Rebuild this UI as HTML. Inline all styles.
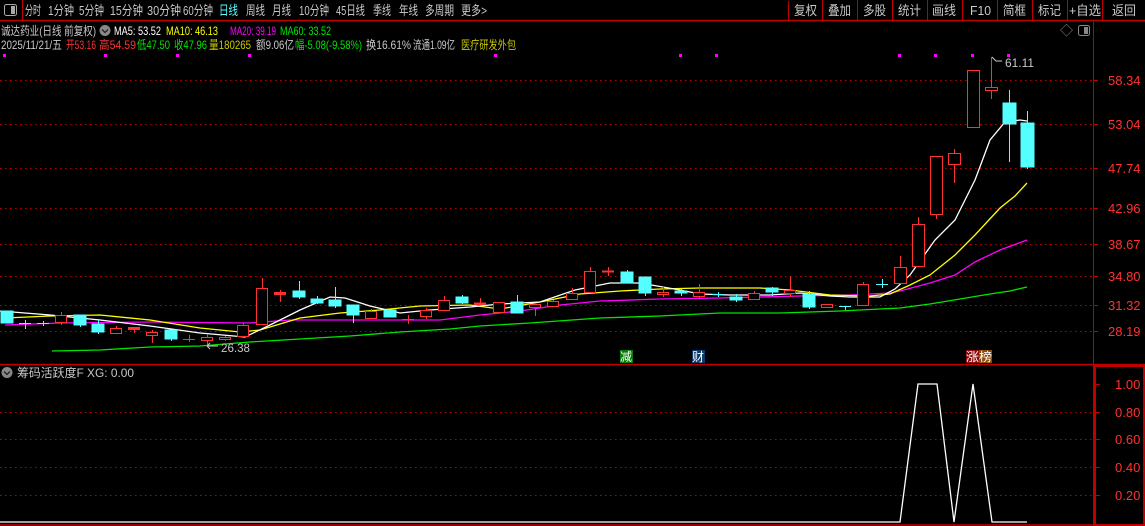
<!DOCTYPE html>
<html><head><meta charset="utf-8"><style>
body{margin:0;background:#000;width:1145px;height:526px;overflow:hidden;font-family:"Liberation Sans","Noto Sans CJK SC",sans-serif;}
svg{display:block}
text{font-family:"Liberation Sans","Noto Sans CJK SC",sans-serif;}
</style></head><body>
<svg width="1145" height="526" viewBox="0 0 1145 526" xmlns="http://www.w3.org/2000/svg">
<rect width="1145" height="526" fill="#000"/>
<line x1="0" y1="20.5" x2="1145" y2="20.5" stroke="#c00000" stroke-width="1.5"/>
<line x1="22.5" y1="0" x2="22.5" y2="20" stroke="#c00000"/>
<rect x="4.5" y="4.5" width="12" height="11" rx="2" fill="none" stroke="#aaa"/>
<rect x="11" y="6" width="4" height="8" fill="#aaa"/>
<g font-size="13" fill="#c8c8c8">
<text x="25" y="15" textLength="16" lengthAdjust="spacingAndGlyphs">分时</text>
<text x="48" y="15" textLength="26" lengthAdjust="spacingAndGlyphs">1分钟</text>
<text x="79" y="15" textLength="25" lengthAdjust="spacingAndGlyphs">5分钟</text>
<text x="110" y="15" textLength="33" lengthAdjust="spacingAndGlyphs">15分钟</text>
<text x="147" y="15" textLength="34" lengthAdjust="spacingAndGlyphs">30分钟</text>
<text x="183" y="15" textLength="30" lengthAdjust="spacingAndGlyphs">60分钟</text>
<text x="219" y="15" textLength="19" lengthAdjust="spacingAndGlyphs" fill="#54ffff">日线</text>
<text x="246" y="15" textLength="19" lengthAdjust="spacingAndGlyphs">周线</text>
<text x="272" y="15" textLength="19" lengthAdjust="spacingAndGlyphs">月线</text>
<text x="299" y="15" textLength="30" lengthAdjust="spacingAndGlyphs">10分钟</text>
<text x="336" y="15" textLength="29" lengthAdjust="spacingAndGlyphs">45日线</text>
<text x="373" y="15" textLength="18" lengthAdjust="spacingAndGlyphs">季线</text>
<text x="399" y="15" textLength="19" lengthAdjust="spacingAndGlyphs">年线</text>
<text x="425" y="15" textLength="29" lengthAdjust="spacingAndGlyphs">多周期</text>
<text x="461" y="15" textLength="26" lengthAdjust="spacingAndGlyphs">更多&gt;</text>
<text x="794" y="15" textLength="23" lengthAdjust="spacingAndGlyphs">复权</text>
<text x="828" y="15" textLength="23" lengthAdjust="spacingAndGlyphs">叠加</text>
<text x="863" y="15" textLength="23" lengthAdjust="spacingAndGlyphs">多股</text>
<text x="898" y="15" textLength="23" lengthAdjust="spacingAndGlyphs">统计</text>
<text x="932" y="15" textLength="24" lengthAdjust="spacingAndGlyphs">画线</text>
<text x="970" y="15" textLength="21" lengthAdjust="spacingAndGlyphs">F10</text>
<text x="1003" y="15" textLength="23" lengthAdjust="spacingAndGlyphs">简框</text>
<text x="1038" y="15" textLength="23" lengthAdjust="spacingAndGlyphs">标记</text>
<text x="1069" y="15" textLength="32" lengthAdjust="spacingAndGlyphs">+自选</text>
<text x="1112" y="15" textLength="24" lengthAdjust="spacingAndGlyphs">返回</text>
</g>
<g stroke="#c00000"><line x1="788.5" y1="1" x2="788.5" y2="20"/><line x1="822.5" y1="0" x2="822.5" y2="20"/><line x1="857.5" y1="0" x2="857.5" y2="20"/><line x1="892.5" y1="0" x2="892.5" y2="20"/><line x1="927.5" y1="0" x2="927.5" y2="20"/><line x1="962.5" y1="0" x2="962.5" y2="20"/><line x1="997.5" y1="0" x2="997.5" y2="20"/><line x1="1032.5" y1="0" x2="1032.5" y2="20"/><line x1="1067.5" y1="0" x2="1067.5" y2="20"/><line x1="1102.5" y1="0" x2="1102.5" y2="20"/></g>
<g font-size="12">
<text x="1" y="35" textLength="95" lengthAdjust="spacingAndGlyphs" fill="#c8c8c8">诚达药业(日线 前复权)</text>
<circle cx="105" cy="30.5" r="5.5" fill="#888"/><path d="M102 29.5l3 3 3-3" stroke="#222" fill="none" stroke-width="1.3"/>
<text x="114" y="35" textLength="47" lengthAdjust="spacingAndGlyphs" fill="#fff">MA5: 53.52</text>
<text x="166" y="35" textLength="52" lengthAdjust="spacingAndGlyphs" fill="#ffff00">MA10: 46.13</text>
<text x="230" y="35" textLength="46" lengthAdjust="spacingAndGlyphs" fill="#ff00ff">MA20: 39.19</text>
<text x="280" y="35" textLength="51" lengthAdjust="spacingAndGlyphs" fill="#00e600">MA60: 33.52</text>
<text x="1" y="49" textLength="61" lengthAdjust="spacingAndGlyphs" fill="#c8c8c8">2025/11/21/五</text>
<text x="66" y="49" textLength="30" lengthAdjust="spacingAndGlyphs" fill="#ff3232">开53.16</text>
<text x="99" y="49" textLength="37" lengthAdjust="spacingAndGlyphs" fill="#ff3232">高54.59</text>
<text x="137" y="49" textLength="33" lengthAdjust="spacingAndGlyphs" fill="#00e600">低47.50</text>
<text x="174" y="49" textLength="33" lengthAdjust="spacingAndGlyphs" fill="#00e600">收47.96</text>
<text x="209" y="49" textLength="42" lengthAdjust="spacingAndGlyphs" fill="#c8c800">量180265</text>
<text x="256" y="49" textLength="38" lengthAdjust="spacingAndGlyphs" fill="#c8c8c8">额9.06亿</text>
<text x="295" y="49" textLength="67" lengthAdjust="spacingAndGlyphs" fill="#00e600">幅-5.08(-9.58%)</text>
<text x="366" y="49" textLength="45" lengthAdjust="spacingAndGlyphs" fill="#c8c8c8">换16.61%</text>
<text x="413" y="49" textLength="42" lengthAdjust="spacingAndGlyphs" fill="#c8c8c8">流通1.09亿</text>
<text x="461" y="49" textLength="55" lengthAdjust="spacingAndGlyphs" fill="#c8c800">医疗研发外包</text>
</g>
<text x="1060" y="35" font-size="13" fill="#888">◇</text>
<rect x="1078.5" y="25.5" width="11" height="10" rx="2" fill="none" stroke="#888"/><rect x="1084" y="27" width="4" height="7" fill="#888"/>
<g fill="#ff00ff"><rect x="3" y="54" width="3" height="3"/><rect x="104" y="54" width="3" height="3"/><rect x="176" y="54" width="3" height="3"/><rect x="248" y="54" width="3" height="3"/><rect x="494" y="54" width="3" height="3"/><rect x="679" y="54" width="3" height="3"/><rect x="715" y="54" width="3" height="3"/><rect x="898" y="54" width="3" height="3"/><rect x="934" y="54" width="3" height="3"/><rect x="971" y="54" width="3" height="3"/><rect x="1007" y="54" width="3" height="3"/></g>
<line x1="1093.5" y1="21" x2="1093.5" y2="526" stroke="#c00000"/>
<line x1="0" y1="364.5" x2="1145" y2="364.5" stroke="#c00000" stroke-width="1.5"/>
<rect x="1095" y="366" width="49" height="159" fill="none" stroke="#c00000" stroke-width="2"/>
<line x1="0" y1="525" x2="1093" y2="525" stroke="#c00000" stroke-width="1.5"/>
<g stroke="#c00000" stroke-dasharray="1.5,3.5" stroke-width="1">
<line x1="0" y1="80.5" x2="1093" y2="80.5"/><line x1="0" y1="124.5" x2="1093" y2="124.5"/><line x1="0" y1="168.5" x2="1093" y2="168.5"/><line x1="0" y1="208.5" x2="1093" y2="208.5"/><line x1="0" y1="244.5" x2="1093" y2="244.5"/><line x1="0" y1="276.5" x2="1093" y2="276.5"/><line x1="0" y1="305.5" x2="1093" y2="305.5"/><line x1="0" y1="331.5" x2="1093" y2="331.5"/>
<line x1="0" y1="412.5" x2="1093" y2="412.5"/><line x1="0" y1="439.5" x2="1093" y2="439.5"/><line x1="0" y1="467.5" x2="1093" y2="467.5"/><line x1="0" y1="495.5" x2="1093" y2="495.5"/>
</g>
<g stroke="#c00000"><line x1="1093" y1="80.5" x2="1098" y2="80.5"/><line x1="1093" y1="124.5" x2="1098" y2="124.5"/><line x1="1093" y1="168.5" x2="1098" y2="168.5"/><line x1="1093" y1="208.5" x2="1098" y2="208.5"/><line x1="1093" y1="244.5" x2="1098" y2="244.5"/><line x1="1093" y1="276.5" x2="1098" y2="276.5"/><line x1="1093" y1="305.5" x2="1098" y2="305.5"/><line x1="1093" y1="331.5" x2="1098" y2="331.5"/>
<line x1="1095" y1="384.5" x2="1100" y2="384.5"/><line x1="1095" y1="412.5" x2="1100" y2="412.5"/><line x1="1095" y1="439.5" x2="1100" y2="439.5"/><line x1="1095" y1="467.5" x2="1100" y2="467.5"/><line x1="1095" y1="495.5" x2="1100" y2="495.5"/></g>
<g font-size="13" fill="#ff3232">
<text x="1108" y="85">58.34</text><text x="1108" y="129">53.04</text><text x="1108" y="173">47.74</text><text x="1108" y="213">42.96</text><text x="1108" y="249">38.67</text><text x="1108" y="281">34.80</text><text x="1108" y="310">31.32</text><text x="1108" y="336">28.19</text>
<text x="1115" y="389">1.00</text><text x="1115" y="417">0.80</text><text x="1115" y="444">0.60</text><text x="1115" y="472">0.40</text><text x="1115" y="500">0.20</text>
</g>
<polyline fill="none" stroke="#00e600" stroke-width="1.3" points="52,351 100,350 150,347 200,346 250,342 300,339 350,336 400,332 450,329 480,326 530,323 600,318 660,316 720,313 780,313 840,311 900,308 930,304 960,299 990,294 1010,291 1027,287"/>
<polyline fill="none" stroke="#ff00ff" stroke-width="1.3" points="5,325 60,323 150,322 250,323 290,320 380,320 440,320 480,315 520,311 560,305 600,301 660,299 720,298 800,296 850,295 890,293 900,291 930,283 955,275 975,262 1000,250 1027,240"/>
<polyline fill="none" stroke="#ffff00" stroke-width="1.3" points="5,318 50,316 100,315 150,320 200,328 240,332 260,330 300,318 340,313 380,310 420,306 470,305 500,309 540,302 580,294 620,291 660,289 700,288 760,288 790,290 830,295 870,296 890,294 910,285 930,275 955,255 975,235 1000,208 1015,196 1027,183"/>
<polyline fill="none" stroke="#ffffff" stroke-width="1.3" points="0,311 50,315 100,320 150,326 200,333 245,337 270,325 300,310 330,297 345,298 370,306 400,313 430,310 470,307 500,304 540,302 575,290 610,283 640,283 680,290 700,294 730,295 770,295 800,293 830,296 850,297 880,297 895,289 910,275 935,240 955,220 975,180 990,140 1005,122 1020,120 1027,121"/>
<g stroke-width="1">
<g fill="#54ffff" stroke="#54ffff">
<line x1="7.5" y1="311" x2="7.5" y2="323"/><rect x="1" y="311" width="12" height="12"/>
<line x1="19" y1="323.5" x2="31" y2="323.5"/><line x1="25.5" y1="320" x2="25.5" y2="329"/>
<line x1="37" y1="323.5" x2="49" y2="323.5"/><line x1="43.5" y1="321" x2="43.5" y2="326"/>
<line x1="80.5" y1="315" x2="80.5" y2="327"/><rect x="74" y="315" width="12" height="10"/>
<line x1="98.5" y1="320" x2="98.5" y2="334"/><rect x="92" y="324" width="12" height="8"/>
<line x1="171.5" y1="330" x2="171.5" y2="341"/><rect x="165" y="330" width="12" height="9"/>
<line x1="299.5" y1="281" x2="299.5" y2="299"/><rect x="293" y="291" width="12" height="6"/>
<line x1="317.5" y1="296" x2="317.5" y2="304"/><rect x="311" y="299" width="12" height="4"/>
<line x1="335.5" y1="287" x2="335.5" y2="308"/><rect x="329" y="300" width="12" height="6"/>
<line x1="353.5" y1="305" x2="353.5" y2="323"/><rect x="347" y="305" width="12" height="10"/>
<rect x="384" y="310" width="12" height="7"/>
<line x1="462.5" y1="295" x2="462.5" y2="304"/><rect x="456" y="297" width="12" height="6"/>
<line x1="517.5" y1="295" x2="517.5" y2="313"/><rect x="511" y="302" width="12" height="11"/>
<line x1="627.5" y1="270" x2="627.5" y2="283"/><rect x="621" y="272" width="12" height="11"/>
<line x1="645.5" y1="277" x2="645.5" y2="296"/><rect x="639" y="277" width="12" height="16"/>
<line x1="681.5" y1="288" x2="681.5" y2="296"/><rect x="675" y="291" width="12" height="2"/>
<line x1="712" y1="294.5" x2="724" y2="294.5"/><line x1="718.5" y1="292" x2="718.5" y2="297"/>
<line x1="736.5" y1="294" x2="736.5" y2="302"/><rect x="730" y="297" width="12" height="3"/>
<line x1="772.5" y1="287" x2="772.5" y2="296"/><rect x="766" y="288" width="12" height="4"/>
<line x1="809.5" y1="291" x2="809.5" y2="309"/><rect x="803" y="294" width="12" height="13"/>
<line x1="839" y1="306.5" x2="851" y2="306.5"/><line x1="845.5" y1="306" x2="845.5" y2="310"/>
<line x1="876" y1="284.5" x2="888" y2="284.5"/><line x1="882.5" y1="279" x2="882.5" y2="288"/>
<line x1="1009.5" y1="90" x2="1009.5" y2="162"/><rect x="1003" y="103" width="13" height="21"/>
<line x1="1027.5" y1="111" x2="1027.5" y2="169"/><rect x="1021" y="123" width="13" height="44"/>
</g>
<g fill="#000" stroke="#ff3232">
<line x1="61.5" y1="312" x2="61.5" y2="325"/><rect x="55.5" y="315.5" width="11" height="7"/>
<line x1="116.5" y1="326" x2="116.5" y2="334"/><rect x="110.5" y="328.5" width="11" height="5"/>
<line x1="134.5" y1="327" x2="134.5" y2="333"/><rect x="128.5" y="327.5" width="11" height="2" fill="#ff3232"/>
<line x1="152.5" y1="330" x2="152.5" y2="343"/><rect x="146.5" y="332.5" width="11" height="3"/>
<line x1="183" y1="339.5" x2="195" y2="339.5"/><line x1="189.5" y1="335" x2="189.5" y2="342"/>
<line x1="207.5" y1="334" x2="207.5" y2="345"/><rect x="201.5" y="337.5" width="11" height="3"/>
<line x1="225.5" y1="336" x2="225.5" y2="341"/><rect x="219.5" y="337.5" width="11" height="2"/>
<line x1="243.5" y1="323" x2="243.5" y2="337"/><rect x="237.5" y="325.5" width="11" height="11"/>
<line x1="262.5" y1="278" x2="262.5" y2="325"/><rect x="256.5" y="288.5" width="11" height="36"/>
<line x1="280.5" y1="290" x2="280.5" y2="302"/><rect x="274.5" y="292.5" width="11" height="2" fill="#ff3232"/>
<line x1="371.5" y1="309" x2="371.5" y2="319"/><rect x="365.5" y="311.5" width="11" height="7"/>
<line x1="402" y1="319.5" x2="414" y2="319.5"/><line x1="408.5" y1="315" x2="408.5" y2="324"/>
<line x1="426.5" y1="308" x2="426.5" y2="319"/><rect x="420.5" y="310.5" width="11" height="6"/>
<line x1="444.5" y1="296" x2="444.5" y2="311"/><rect x="438.5" y="300.5" width="11" height="10"/>
<line x1="480.5" y1="298" x2="480.5" y2="305"/><rect x="474.5" y="303" width="11" height="1.5" fill="#ff3232"/>
<rect x="493.5" y="302.5" width="11" height="10"/>
<line x1="535.5" y1="304" x2="535.5" y2="316"/><rect x="529.5" y="304.5" width="11" height="3"/>
<line x1="553.5" y1="300" x2="553.5" y2="307"/><rect x="547.5" y="301.5" width="11" height="5"/>
<line x1="572.5" y1="288" x2="572.5" y2="300"/><rect x="566.5" y="293.5" width="11" height="6"/>
<line x1="590.5" y1="267" x2="590.5" y2="293"/><rect x="584.5" y="271.5" width="11" height="21"/>
<line x1="602" y1="271.5" x2="614" y2="271.5" stroke-width="2"/><line x1="608.5" y1="267" x2="608.5" y2="276"/>
<line x1="663.5" y1="286" x2="663.5" y2="297"/><rect x="657.5" y="292.5" width="11" height="2"/>
<line x1="699.5" y1="284" x2="699.5" y2="299"/><rect x="693.5" y="292.5" width="11" height="4"/>
<line x1="754.5" y1="291" x2="754.5" y2="300"/><rect x="748.5" y="293.5" width="11" height="6"/>
<line x1="790.5" y1="276" x2="790.5" y2="297"/><rect x="784.5" y="290.5" width="11" height="3"/>
<rect x="821.5" y="304.5" width="11" height="3"/>
<line x1="863.5" y1="282" x2="863.5" y2="306"/><rect x="857.5" y="284.5" width="11" height="21"/>
<line x1="900.5" y1="256" x2="900.5" y2="284"/><rect x="894.5" y="267.5" width="12" height="16"/>
<line x1="918.5" y1="217" x2="918.5" y2="267"/><rect x="912.5" y="224.5" width="12" height="42"/>
<line x1="936.5" y1="156" x2="936.5" y2="219"/><rect x="930.5" y="156.5" width="12" height="58"/>
<line x1="954.5" y1="149" x2="954.5" y2="183"/><rect x="948.5" y="153.5" width="12" height="11"/>
<rect x="967.5" y="70.5" width="12" height="57"/>
<line x1="991.5" y1="57" x2="991.5" y2="99"/><rect x="985.5" y="87.5" width="12" height="3"/>
</g>
</g>
<text x="221" y="352" font-size="12" textLength="29" lengthAdjust="spacingAndGlyphs" fill="#c8c8c8">26.38</text>
<path d="M207 346h11M207 346l3-3M207 346l3 3" stroke="#c8c8c8" fill="none"/>
<text x="1005" y="67" font-size="12" textLength="29" lengthAdjust="spacingAndGlyphs" fill="#c8c8c8">61.11</text>
<path d="M992 57l4 4h6" stroke="#c8c8c8" fill="none"/>
<rect x="620" y="350" width="13" height="13" fill="#0a7a0a"/><text x="620" y="361" font-size="12" fill="#fff">减</text>
<rect x="692" y="350" width="13" height="13" fill="#0a3a6a"/><text x="692" y="361" font-size="12" fill="#fff">财</text>
<rect x="966" y="350" width="13" height="13" fill="#8a0a0a"/><rect x="979" y="350" width="13" height="13" fill="#8a4a0a"/><text x="966" y="361" font-size="12" textLength="26" lengthAdjust="spacingAndGlyphs" fill="#fff">涨榜</text>
<circle cx="7" cy="372.5" r="5.5" fill="#888"/><path d="M4 371.5l3 3 3-3" stroke="#222" fill="none" stroke-width="1.3"/>
<text x="17" y="377" font-size="12" textLength="117" lengthAdjust="spacingAndGlyphs" fill="#c8c8c8">筹码活跃度F  XG: 0.00</text>
<polyline fill="none" stroke="#fff" stroke-width="1.3" points="0,522 900,522 918,384 937,384 954,522 973,384 992,522 1027,522"/>
</svg>
</body></html>
